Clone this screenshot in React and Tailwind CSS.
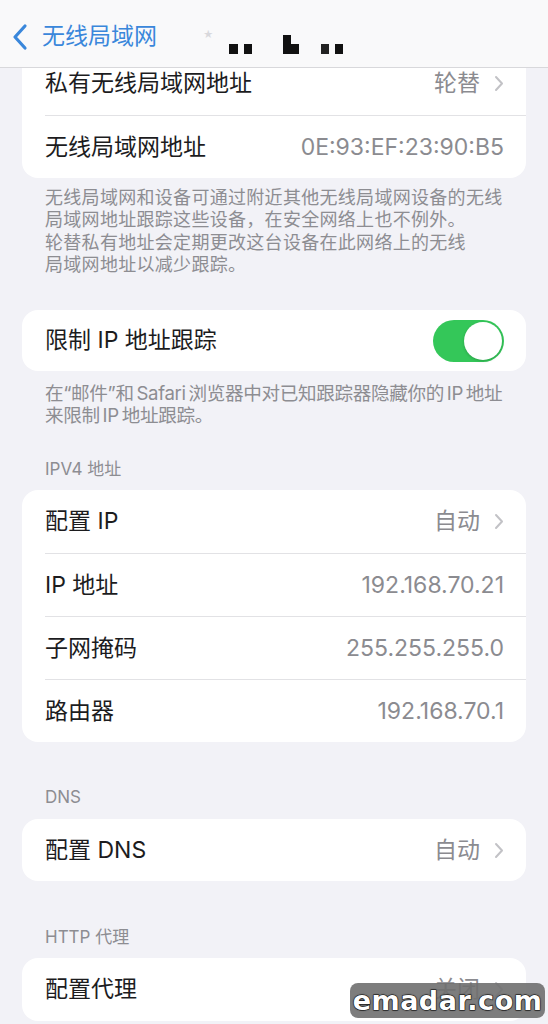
import React from "react";

const FONT = { fontFamily: 'Inter, "Noto Sans CJK SC", "Noto Sans", sans-serif' };

function Chevron() {
  return (
    <svg width="10" height="17" viewBox="0 0 10 17" className="ml-[14px] shrink-0">
      <path d="M2 2 L8 8.5 L2 15" fill="none" stroke="#c2c2c6" strokeWidth="2" strokeLinecap="round" strokeLinejoin="round" />
    </svg>
  );
}

function Row({ label, value, chevron, first, h = "h-[63px]" }) {
  return (
    <div
      className={
        "ml-[23px] pr-[22px] flex items-center justify-between " +
        h +
        (first ? "" : " border-t border-[#e2e2e5]")
      }
    >
      <span className="text-[23px] text-[#1c1c1e]">{label}</span>
      <span className="flex items-center text-[23px] text-[#8b8b90]">
        {value}
        {chevron && <Chevron />}
      </span>
    </div>
  );
}

function Card({ children, className = "" }) {
  return <div className={"bg-white rounded-[16px] overflow-hidden " + className}>{children}</div>;
}

function Header({ children, className = "" }) {
  return (
    <div className={"pl-[23px] text-[17px] leading-[22px] text-[#8d8d92] " + className}>{children}</div>
  );
}

export default function App() {
  return (
    <div className="w-[548px] h-[1024px] overflow-hidden bg-[#f2f2f7] relative" style={FONT}>
      <nav className="relative z-10 h-[68px] bg-[#f9f9fa] border-b border-[#d8d8db] flex items-center pt-[6px]">
        <svg width="18" height="28" viewBox="0 0 18 28" className="ml-[11px]">
          <path d="M14 3 L4 14 L14 25" fill="none" stroke="#3a87db" strokeWidth="3.2" strokeLinecap="round" strokeLinejoin="round" />
        </svg>
        <span className="ml-[13px] text-[23px] text-[#3a87db]">无线局域网</span>
        <span className="ml-[46px] text-[10px] text-[#d8d8dc] -mt-[4px]">★</span>
        <svg width="125" height="24" viewBox="0 0 125 24" className="ml-[16px] mt-[12px]">
          <rect x="0" y="13" width="9" height="10" fill="#111" />
          <rect x="15" y="13" width="8" height="10" fill="#111" />
          <rect x="54" y="4" width="8" height="19" fill="#111" />
          <rect x="54" y="13" width="16" height="10" fill="#111" />
          <rect x="92" y="13" width="8" height="10" fill="#222" />
          <rect x="106" y="13" width="8" height="10" fill="#111" />
        </svg>
      </nav>

      <div className="-mt-[16px] px-[22px]">
        <Card>
          <Row first label="私有无线局域网地址" value="轮替" chevron />
          <Row label="无线局域网地址" value="0E:93:EF:23:90:B5" />
        </Card>

        <div className="pl-[23px] pt-[9px] text-[18px] leading-[22.3px] text-[#8d8d92] whitespace-nowrap tracking-[0.3px]">
          无线局域网和设备可通过附近其他无线局域网设备的无线
          <br />
          局域网地址跟踪这些设备，在安全网络上也不例外。
          <br />
          轮替私有地址会定期更改这台设备在此网络上的无线
          <br />
          局域网地址以减少跟踪。
        </div>

        <Card className="mt-[34px]">
          <div className="ml-[23px] pr-[22px] h-[61px] flex items-center justify-between">
            <span className="text-[23px] text-[#1c1c1e]">限制 IP 地址跟踪</span>
            <div className="relative w-[71px] h-[42px] rounded-full bg-[#34c759]">
              <div className="absolute right-[2px] top-[2px] w-[38px] h-[38px] rounded-full bg-white shadow-[0_1px_3px_rgba(0,0,0,0.2)]" />
            </div>
          </div>
        </Card>

        <div className="pl-[23px] pt-[11px] text-[18.6px] leading-[22px] text-[#8d8d92] whitespace-nowrap tracking-[-0.35px] [word-spacing:-2px]">
          在“邮件”和 Safari 浏览器中对已知跟踪器隐藏你的 IP 地址
          <br />
          来限制 IP 地址跟踪。
        </div>

        <Header className="mt-[32px]">IPV4 地址</Header>
        <Card className="mt-[10px]">
          <Row first label="配置 IP" value="自动" chevron />
          <Row label="IP 地址" value="192.168.70.21" />
          <Row label="子网掩码" value="255.255.255.0" />
          <Row label="路由器" value="192.168.70.1" />
        </Card>

        <Header className="mt-[44px]">DNS</Header>
        <Card className="mt-[11px]">
          <Row first h="h-[62px]" label="配置 DNS" value="自动" chevron />
        </Card>

        <Header className="mt-[45px]">HTTP 代理</Header>
        <Card className="mt-[10px]">
          <Row first label="配置代理" value="关闭" chevron />
        </Card>
      </div>

      <div className="absolute left-[350px] top-[983px] w-[195px] h-[35px] rounded-[8px] bg-[#6f6f6f]/90 flex items-center justify-center">
        <span
          className="text-[27px] font-bold text-white leading-none tracking-[0.5px]"
          style={{ fontFamily: '"DejaVu Sans", sans-serif', WebkitTextStroke: "1px #111", paintOrder: "stroke fill", textShadow: "0 0 2px #000" }}
        >
          emadar.com
        </span>
      </div>
    </div>
  );
}
